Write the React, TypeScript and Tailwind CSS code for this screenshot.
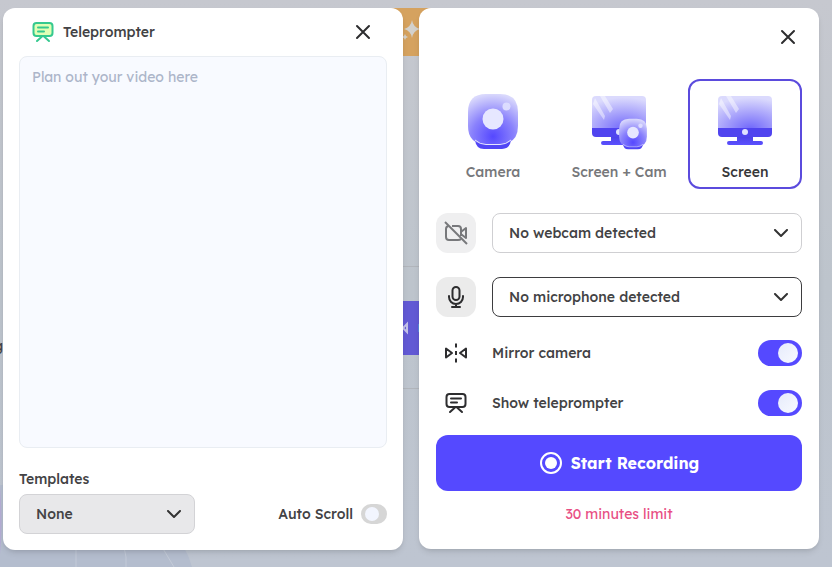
import { useState } from 'react';
import type { ReactNode } from 'react';

type Mode = 'camera' | 'both' | 'screen';

function TeleprompterIcon({ className, fill = 'none' }: { className?: string; fill?: string }) {
  return (
    <svg viewBox="0 0 24 24" className={className} fill="none" stroke="currentColor" strokeWidth="2" strokeLinecap="round" strokeLinejoin="round" aria-hidden="true">
      <rect x="2.5" y="3" width="19" height="13" rx="3" fill={fill} />
      <path d="M7 7.5h10M7 11.5h6M11 16.5L6 21M13 16.5l5 4.500" />
    </svg>
  );
}

function CloseIcon() {
  return (
    <svg viewBox="0 0 24 24" className="size-6" fill="none" stroke="currentColor" strokeWidth="2" strokeLinecap="round" aria-hidden="true">
      <path d="M6 6l12 12M18 6L6 18" />
    </svg>
  );
}

function CameraOffIcon() {
  return (
    <svg viewBox="0 0 24 24" className="size-6" fill="none" stroke="currentColor" strokeWidth="2" strokeLinejoin="round" aria-hidden="true">
      <path d="M4.500 5Q2 5.500 2 8v8q0 3 3 3h9q2 0 3-1M8 5h6q3 0 3 3v7M17.500 10.500L22 7v10l-4.500-3.500" />
      <path d="M1 1l22 22" />
    </svg>
  );
}

function MicIcon() {
  return (
    <svg viewBox="0 0 24 24" className="size-6" fill="none" stroke="currentColor" strokeWidth="2" strokeLinecap="round" aria-hidden="true">
      <rect x="8.500" y="2" width="7" height="13" rx="3.500" />
      <path d="M5 11v1a7 7 0 0 0 14 0v-1M12 19v3M8 22h8" />
    </svg>
  );
}

function MirrorIcon() {
  return (
    <svg viewBox="0 0 24 24" className="size-6" fill="none" stroke="currentColor" strokeWidth="2" strokeLinejoin="round" aria-hidden="true">
      <path d="M2 7.500v9L8 12zM22 7.500v9L16 12z" />
      <path d="M12 2.500v4M12 10v4M12 17.500v4" />
    </svg>
  );
}

function Gradients() {
  return (
    <svg className="absolute size-0" aria-hidden="true">
      <defs>
        <radialGradient id="lens" cx="0.5" cy="0.85" r="0.85">
          <stop offset="0" stopColor="#5548ff" />
          <stop offset="0.500" stopColor="#8a82fc" />
          <stop offset="1" stopColor="#d9d8fc" />
        </radialGradient>
        <radialGradient id="display" cx="0.6" cy="1" r="0.95">
          <stop offset="0" stopColor="#7067fb" />
          <stop offset="0.450" stopColor="#a09afb" />
          <stop offset="1" stopColor="#dbdafd" />
        </radialGradient>
        <linearGradient id="stand" x1="0" y1="0" x2="0" y2="1">
          <stop offset="0" stopColor="#4a3fe2" />
          <stop offset="1" stopColor="#5b50ff" />
        </linearGradient>
      </defs>
    </svg>
  );
}

function CameraShape() {
  return (
    <>
      <path d="M9 46h36q-1 9-9 9H18q-8 0-9-9z" fill="#5145f5" />
      <path d="M20 0h14q18 0 18 18v14q0 18-18 18H20Q2 50 2 32V18Q2 0 20 0z" fill="url(#lens)" />
      <path d="M9 46q5 4.500 11 4.500h14q6 0 11-4.500" fill="none" stroke="#e6e5ff" strokeWidth="1" />
      <circle cx="27" cy="25" r="10.500" fill="#e6e7ff" />
      <circle cx="40.500" cy="12.500" r="4" fill="#dcdcff" />
    </>
  );
}

function MonitorShape() {
  return (
    <>
      <path d="M19 39h16v6h8q2 0 2 2t-2 2H11q-2 0-2-2t2-2h8z" fill="url(#stand)" />
      <path d="M4 0h46q4 0 4 4v29H0V4q0-4 4-4z" fill="url(#display)" />
      <path d="M1 8l2-6 10 18-1 4zM8 0h5l8 13-3 4z" fill="#fff" opacity="0.45" />
      <path d="M0 32h54v5q0 4-4 4H4q-4 0-4-4z" fill="#5044ef" />
      <circle cx="27" cy="36" r="3" fill="#dfe1ff" />
    </>
  );
}

function ModeIcon({ mode }: { mode: Mode }) {
  if (mode === 'camera') {
    return (
      <svg width="56" height="56" viewBox="-1 -1 56 56" className="overflow-visible" aria-hidden="true">
        <CameraShape />
      </svg>
    );
  }
  return (
    <svg width="56" height="56" viewBox="-1 -3 56 56" className="overflow-visible" aria-hidden="true">
      <MonitorShape />
      {mode === 'both' && (
        <svg x="26" y="22" width="30" height="32" viewBox="0 -1 54 57">
          <CameraShape />
        </svg>
      )}
    </svg>
  );
}

function SelectBox({ id, label, value, className }: { id: string; label?: string; value: string; className: string }) {
  return (
    <div className="relative grow">
      <select id={id} aria-label={label} className={`h-10 w-full appearance-none rounded-lg border pl-4 pr-10 text-[#434345] ${className}`}>
        <option>{value}</option>
      </select>
      <svg viewBox="0 0 16 10" className="pointer-events-none absolute right-[13px] top-4 h-[10px] w-4" fill="none" stroke="#333" strokeWidth="2" strokeLinecap="round" strokeLinejoin="round" aria-hidden="true">
        <path d="M2 1l6 6 6-6" />
      </svg>
    </div>
  );
}

function SwitchRow({ id, icon, label }: { id: string; icon: ReactNode; label: string }) {
  return (
    <div className="flex h-10 items-center gap-4">
      <span className="flex w-10 justify-center text-[#2d2d2f]">{icon}</span>
      <label htmlFor={id} className="grow">{label}</label>
      <input
        id={id}
        type="checkbox"
        role="switch"
        defaultChecked
        className="flex h-[26px] w-11 appearance-none items-center rounded-full bg-[#d6d6d6] p-1 before:size-5 before:rounded-full before:bg-linear-to-br before:from-[#e6ebfb] before:to-[#f8faff] checked:justify-end checked:bg-[#5549ff]"
      />
    </div>
  );
}

function Backdrop() {
  return (
    <div className="absolute inset-0 -z-10 overflow-hidden bg-linear-to-b from-[#c6c8cf] via-[#bdc4cc] to-[#bec5d1]" aria-hidden="true">
      <svg className="absolute bottom-0 left-0 h-24 w-64" viewBox="0 0 256 96">
        <path d="M0 14q170 0 192 82H0z" fill="#b4bdce" />
        <path d="M0 14q3 40 0 70z" fill="#b4add4" />
        <path d="M76 76v20M124 76q3 10 2 20M162 76l12 20" stroke="#c3cad8" fill="none" />
      </svg>
      <span className="absolute -left-[6px] top-[336px] font-normal">g</span>
      <div className="absolute left-1/3 right-[400px] top-2 h-12 bg-[#d5a25f]" />
      <svg className="absolute left-[402px] top-[20px] size-5" viewBox="0 0 20 20" fill="#d3d1cc">
        <path d="M10 0q1 7 8 9-7 2-8 9-1-7-8-9 7-2 8-9zM3 14l1 2 2 1-2 1-1 2-1-2-2-1 2-1z" />
      </svg>
      <div className="absolute left-1/3 right-[400px] top-[266px] h-[123px] border-y border-[#b1b5bb]" />
      <div className="absolute left-1/3 right-[400px] top-[301px] h-[54px] bg-[#6259d4]" />
      <svg className="absolute left-[400px] top-[321px] h-[14px] w-5" viewBox="0 0 20 14" fill="none" stroke="#c3c1e8" strokeWidth="2">
        <path d="M7 3v8l-4-4z" />
        <path d="M19 3v8" stroke="#5a86dc" />
      </svg>
    </div>
  );
}

const MODES: { id: Mode; label: string }[] = [
  { id: 'camera', label: 'Camera' },
  { id: 'both', label: 'Screen + Cam' },
  { id: 'screen', label: 'Screen' },
];

export default function App() {
  const [mode, setMode] = useState<Mode>('screen');

  return (
    <main className="relative isolate grid min-h-screen grid-cols-2 items-start gap-4 pt-2 pr-[13px] pl-[3px] font-['Lexend','Inter',sans-serif] text-[14px] font-medium text-[#434345]">
      <Backdrop />
      <Gradients />

      <section className="flex flex-col rounded-xl bg-white px-4 pb-4 shadow-md">
        <header className="flex h-12 items-center gap-2 pr-3 pl-3">
          <TeleprompterIcon className="size-6 text-[#35c98f]" fill="#e0ffb5" />
          <h1 className="grow">Teleprompter</h1>
          <button type="button" aria-label="Close teleprompter" className="text-[#2d2d2f]">
            <CloseIcon />
          </button>
        </header>
        <textarea
          aria-label="Script"
          placeholder="Plan out your video here"
          className="h-[392px] w-full resize-none rounded-lg border border-[#e9edf2] bg-[#f8faff] px-3 py-[10px] font-normal placeholder:text-[#acb5c9]"
        />
        <div className="mt-5 flex items-end justify-between">
          <div className="flex w-44 flex-col gap-1">
            <label htmlFor="templates" className="leading-[22px]">Templates</label>
            <SelectBox id="templates" value="None" className="border-[#d3d3d6] bg-[#e8e8ea]" />
          </div>
          <div className="flex h-10 items-center gap-2">
            <label htmlFor="scroll">Auto Scroll</label>
            <input
              id="scroll"
              type="checkbox"
              role="switch"
              className="flex h-5 w-[26px] appearance-none items-center rounded-full bg-[#d6d6d6] p-1 before:size-[14px] before:rounded-full before:bg-[#f2f5fe] checked:justify-end checked:bg-[#5549ff]"
            />
          </div>
        </div>
      </section>

      <section className="flex flex-col rounded-xl bg-white px-[17px] pb-6 shadow-md">
        <header className="flex h-[71px] justify-end pt-[17px] pr-[2px]">
          <button type="button" aria-label="Close recorder" className="size-6 text-[#2d2d2f]">
            <CloseIcon />
          </button>
        </header>
        <div role="radiogroup" aria-label="Recording mode" className="grid grid-cols-3 gap-3">
          {MODES.map((m) => (
            <label
              key={m.id}
              className="relative flex h-[110px] flex-col items-center gap-[13px] rounded-xl border-2 border-transparent pt-3 text-[#77787b] has-checked:border-[#5b4bdd] has-checked:text-[#38383a]"
            >
              <input type="radio" name="mode" value={m.id} checked={mode === m.id} onChange={() => setMode(m.id)} className="sr-only" />
              <ModeIcon mode={m.id} />
              {m.label}
            </label>
          ))}
        </div>
        <div className="mt-6 flex gap-4">
          <span className="flex size-10 items-center justify-center rounded-xl bg-[#efeff0] text-[#77787b]">
            <CameraOffIcon />
          </span>
          <SelectBox id="webcam" label="Webcam" value="No webcam detected" className="border-[#cfcfd2] bg-white" />
        </div>
        <div className="mt-6 flex gap-4">
          <span className="flex size-10 items-center justify-center rounded-xl bg-[#ebebeb] text-[#2d2d2f]">
            <MicIcon />
          </span>
          <SelectBox id="microphone" label="Microphone" value="No microphone detected" className="border-[#3d3d3f] bg-white" />
        </div>
        <div className="mt-4 flex flex-col gap-[10px]">
          <SwitchRow id="mirror" icon={<MirrorIcon />} label="Mirror camera" />
          <SwitchRow id="teleprompter" icon={<TeleprompterIcon className="size-6" />} label="Show teleprompter" />
        </div>
        <button type="button" className="mt-3 flex h-14 items-center justify-center gap-2 rounded-xl bg-[#5549ff] text-[16px] font-bold text-white">
          <svg viewBox="0 0 24 24" className="size-6" aria-hidden="true">
            <circle cx="12" cy="12" r="10" fill="none" stroke="currentColor" strokeWidth="2" />
            <circle cx="12" cy="12" r="6" fill="currentColor" />
          </svg>
          Start Recording
        </button>
        <p className="mt-3 text-center leading-[22px] font-normal text-[#e84f84]">30 minutes limit</p>
      </section>
    </main>
  );
}
